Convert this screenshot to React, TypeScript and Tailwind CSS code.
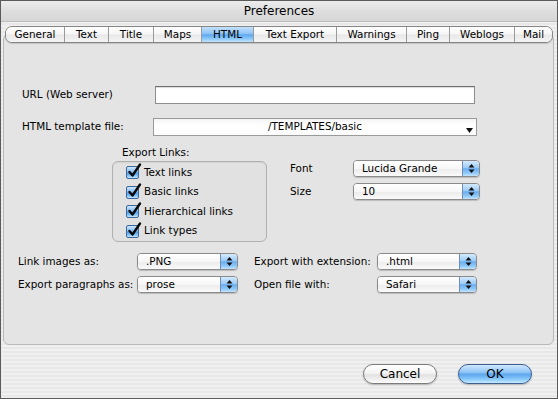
import React from "react";

const font = "font-['Lucida_Grande','DejaVu_Sans',sans-serif]";

const tabs = [
  { label: "General", w: "w-[58px]" },
  { label: "Text", w: "w-[44px]" },
  { label: "Title", w: "w-[45px]" },
  { label: "Maps", w: "w-[48px]" },
  { label: "HTML", w: "w-[52px]", active: true },
  { label: "Text Export", w: "w-[83px]" },
  { label: "Warnings", w: "w-[70px]" },
  { label: "Ping", w: "w-[43px]" },
  { label: "Weblogs", w: "w-[65px]" },
  { label: "Mail", w: "flex-1" },
];

function Arrows() {
  return (
    <svg width="7" height="11" viewBox="0 0 7 11">
      <path d="M3.5 1 L6.5 4.5 L0.5 4.5 Z" fill="#111" />
      <path d="M3.5 10 L6.5 6.5 L0.5 6.5 Z" fill="#111" />
    </svg>
  );
}

function Popup({ value, w }: { value: string; w: string }) {
  return (
    <div
      className={`${w} h-[17px] flex rounded-[4px] border border-[#8a8a8a] shadow-[0_1px_1px_rgba(0,0,0,0.18)] overflow-hidden`}
    >
      <div className="flex-1 flex items-center pl-[8px] bg-[linear-gradient(180deg,#ffffff_0%,#f7f7f7_50%,#ebebeb_51%,#fafafa_100%)] text-black">
        {value}
      </div>
      <div className="w-[17px] flex items-center justify-center border-l border-[#6f8fb8] bg-[linear-gradient(180deg,#d4eafe_0%,#9ccbf6_45%,#6aaef0_52%,#8ec8f8_80%,#c4e4fd_100%)]">
        <Arrows />
      </div>
    </div>
  );
}

function Checkbox({ label }: { label: string }) {
  return (
    <div className="h-[19.5px] flex items-center gap-[5px]">
      <div className="relative w-[13px] h-[13px] rounded-[2px] border border-[#3f6797] bg-[linear-gradient(180deg,#cde6fd_0%,#86bdf3_45%,#4f9ae9_55%,#8ecaf9_85%,#c7e6fe_100%)]">
        <svg className="absolute left-[1px] -top-[4px] overflow-visible" width="13" height="15" viewBox="0 0 13 15">
          <path d="M1.5 9 L4.5 12.5 L12 1.5" fill="none" stroke="#0a0a0a" strokeWidth="2.4" strokeLinecap="round" strokeLinejoin="round" />
        </svg>
      </div>
      <span>{label}</span>
    </div>
  );
}

function AquaButton({ label, blue }: { label: string; blue?: boolean }) {
  return (
    <button
      type="button"
      className={`w-[74px] h-[20px] rounded-full flex items-center justify-center text-[12px] shadow-[0_1px_2px_rgba(0,0,0,0.25)] ${
        blue
          ? "border border-[#3e5f93] bg-[linear-gradient(180deg,#cfe7fd_0%,#92c6f6_40%,#5da6ee_52%,#8ccbfb_80%,#c9ebff_100%)]"
          : "border border-[#7c7c7c] bg-[linear-gradient(180deg,#ffffff_0%,#f4f4f4_45%,#e2e2e2_55%,#f2f2f2_85%,#ffffff_100%)]"
      }`}
    >
      {label}
    </button>
  );
}

export default function App() {
  return (
    <div
      className={`${font} text-[10.4px] text-black w-[558px] h-[399px] border border-[#5a5a5a] flex flex-col bg-[repeating-linear-gradient(180deg,#f0f0f0_0px,#f0f0f0_2px,#e8e8e8_2px,#e8e8e8_4px)]`}
    >
      {/* Title bar */}
      <div className="h-[21px] flex items-center justify-center text-[12px] bg-[linear-gradient(180deg,#ececec_0%,#dedede_50%,#d6d6d6_100%)] border-b border-[#bdbdbd]">
        Preferences
      </div>

      <div className="pt-[4px] pl-[2px] pr-[3px]">
        {/* Tabs */}
        <div className="relative z-10 -mb-[9px] ml-[2px] w-[548px] h-[17px] flex rounded-[7px] border border-[#858585] overflow-hidden shadow-[0_1px_1px_rgba(0,0,0,0.15)]">
          {tabs.map((t, i) => (
            <div
              key={t.label}
              className={`${t.w} flex items-center justify-center ${i > 0 ? "border-l border-[#9b9b9b]" : ""} ${
                t.active
                  ? "bg-[linear-gradient(180deg,#c4e2fd_0%,#8cc2f5_45%,#5ea8ef_52%,#8fcaf9_80%,#c3e4fe_100%)]"
                  : "bg-[linear-gradient(180deg,#ffffff_0%,#f5f5f5_48%,#e8e8e8_52%,#f4f4f4_100%)]"
              }`}
            >
              {t.label}
            </div>
          ))}
        </div>

        {/* Panel */}
        <div className="h-[311px] rounded-[6px] border border-[#b8b8b8] bg-[#e4e4e4] pt-[51px]">
          <div className="flex items-center h-[18px] pl-[18px]">
            <span className="w-[133px]">URL (Web server)</span>
            <div className="w-[320px] h-[18px] bg-white border border-[#8e8e8e] border-t-[#6e6e6e] shadow-[inset_0_1px_1px_rgba(0,0,0,0.15)]" />
          </div>

          <div className="flex items-center h-[18px] pl-[18px] mt-[14px]">
            <span className="w-[131px]">HTML template file:</span>
            <div className="relative w-[324px] h-[18px] flex items-center justify-center border border-[#9a9a9a] bg-[linear-gradient(180deg,#f4f4f4_0%,#ffffff_40%,#fbfbfb_100%)]">
              /TEMPLATES/basic
              <svg className="absolute right-[3px] top-[9px]" width="7" height="5" viewBox="0 0 7 5">
                <path d="M0 0 L7 0 L3.5 5 Z" fill="#111" />
              </svg>
            </div>
          </div>

          <div className="flex pl-[108px] mt-[10px]">
            <div className="w-[155px]">
              <div className="h-[14px] pl-[10px] flex items-center">Export Links:</div>
              <div className="mt-[1px] h-[81px] rounded-[6px] border border-[#b0b0b0] bg-[#e1e1e1] shadow-[inset_0_1px_1px_rgba(0,0,0,0.06)] pt-[1px] pl-[13px]">
                <Checkbox label="Text links" />
                <Checkbox label="Basic links" />
                <Checkbox label="Hierarchical links" />
                <Checkbox label="Link types" />
              </div>
            </div>
            <div className="ml-[23px] pt-[14px] flex flex-col gap-[6px]">
              <div className="flex items-center">
                <span className="w-[63px]">Font</span>
                <Popup value="Lucida Grande" w="w-[127px]" />
              </div>
              <div className="flex items-center">
                <span className="w-[63px]">Size</span>
                <Popup value="10" w="w-[127px]" />
              </div>
            </div>
          </div>

          <div className="flex flex-col gap-[6px] mt-[11px] pl-[14px]">
            <div className="flex items-center">
              <span className="w-[119px]">Link images as:</span>
              <Popup value=".PNG" w="w-[101px]" />
              <span className="w-[123px] ml-[16px]">Export with extension:</span>
              <Popup value=".html" w="w-[100px]" />
            </div>
            <div className="flex items-center">
              <span className="w-[119px]">Export paragraphs as:</span>
              <Popup value="prose" w="w-[101px]" />
              <span className="w-[123px] ml-[16px]">Open file with:</span>
              <Popup value="Safari" w="w-[100px]" />
            </div>
          </div>
        </div>
      </div>

      {/* Buttons */}
      <div className="flex justify-end gap-[21px] pr-[25px] pt-[19px]">
        <AquaButton label="Cancel" />
        <AquaButton label="OK" blue />
      </div>
    </div>
  );
}
